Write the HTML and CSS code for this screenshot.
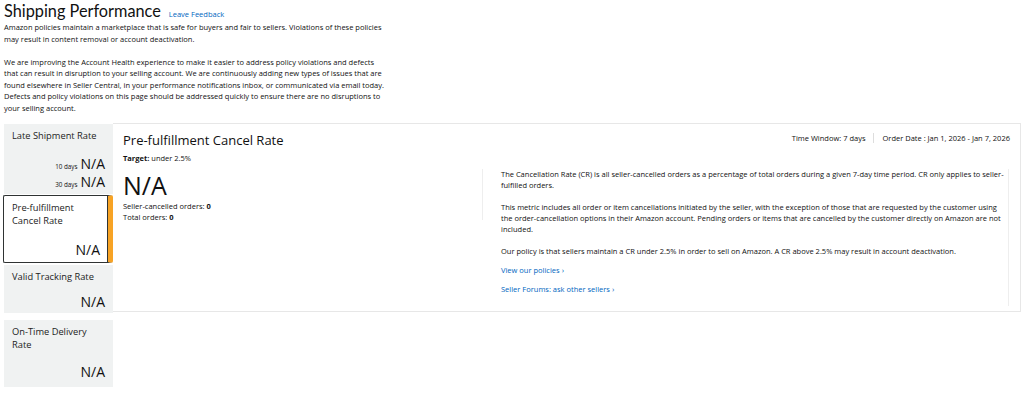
FILE: index.html
```html
<!DOCTYPE html>
<html lang="en">
<head>
    <meta charset="UTF-8">
    <title>Shipping Performance</title>
    <link rel="stylesheet" href="styles.css">
</head>
<body>
    <div class="page">
        <div class="header">
            <h1>Shipping Performance</h1>
            <a class="link feedback" href="#">Leave Feedback</a>
        </div>
        <p class="intro">Amazon policies maintain a marketplace that is safe for buyers and fair to sellers. Violations of these policies may result in content removal or account deactivation.</p>
        <p class="intro">We are improving the Account Health experience to make it easier to address policy violations and defects that can result in disruption to your selling account. We are continuously adding new types of issues that are found elsewhere in Seller Central, in your performance notifications inbox, or communicated via email today. Defects and policy violations on this page should be addressed quickly to ensure there are no disruptions to your selling account.</p>

        <div class="metrics">
            <div class="tabs">
                <div class="tab tab-late">
                    <div class="tab-name">Late Shipment Rate</div>
                    <div class="tab-values">
                        <div class="row"><span class="days">10 days</span><span class="na">N/A</span></div>
                        <div class="row"><span class="days">30 days</span><span class="na">N/A</span></div>
                    </div>
                </div>
                <div class="tab tab-cancel selected">
                    <div class="tab-name">Pre-fulfillment<br>Cancel Rate</div>
                    <div class="tab-values"><span class="na">N/A</span></div>
                </div>
                <div class="tab tab-tracking">
                    <div class="tab-name">Valid Tracking Rate</div>
                    <div class="tab-values"><span class="na">N/A</span></div>
                </div>
                <div class="tab tab-delivery">
                    <div class="tab-name">On-Time Delivery<br>Rate</div>
                    <div class="tab-values"><span class="na">N/A</span></div>
                </div>
            </div>

            <div class="panel">
                <div class="panel-top">
                    <div>
                        <h2>Pre-fulfillment Cancel Rate</h2>
                        <p class="target"><b>Target:</b> under 2.5%</p>
                    </div>
                    <div class="window">
                        <span>Time Window: 7 days</span>
                        <span class="sep"></span>
                        <span>Order Date : Jan 1, 2026 - Jan 7, 2026</span>
                    </div>
                </div>
                <div class="panel-body">
                    <div class="stats">
                        <div class="big-na">N/A</div>
                        <p>Seller-cancelled orders: <b>0</b></p>
                        <p>Total orders: <b>0</b></p>
                    </div>
                    <div class="about">
                        <p>The Cancellation Rate (CR) is all seller-cancelled orders as a percentage of total orders during a given 7-day time period. CR only applies to seller-fulfilled orders.</p>
                        <p>This metric includes all order or item cancellations initiated by the seller, with the exception of those that are requested by the customer using the order-cancellation options in their Amazon account. Pending orders or items that are cancelled by the customer directly on Amazon are not included.</p>
                        <p>Our policy is that sellers maintain a CR under 2.5% in order to sell on Amazon. A CR above 2.5% may result in account deactivation.</p>
                        <a class="link more" href="#">View our policies<span class="chev">›</span></a>
                        <a class="link more" href="#">Seller Forums: ask other sellers<span class="chev">›</span></a>
                    </div>
                </div>
            </div>
        </div>
    </div>
</body>
</html>
```

FILE: styles.css
```css
body {
    margin: 0;
    font-family: "Open Sans", Arial, sans-serif;
    color: #111;
    background: #fff;
}
.page {
    padding: 0 3px 0 4px;
}
.header {
    display: flex;
    align-items: baseline;
    gap: 8px;
    height: 22px;
}
h1 {
    margin: 0;
    font-family: Lato, "Open Sans", sans-serif;
    font-size: 16.3px;
    font-weight: 400;
    line-height: 22px;
}
.link {
    color: #0066c0;
    text-decoration: none;
}
.feedback {
    font-size: 7.5px;
}
.intro {
    margin: 0 0 11.5px;
    max-width: 385px;
    font-size: 7.5px;
    line-height: 11.5px;
}
.intro:last-of-type {
    margin-bottom: 9px;
}
.metrics {
    display: flex;
    align-items: flex-start;
}
.tabs {
    width: 109px;
    display: flex;
    flex-direction: column;
    padding-top: 1px;
}
.tab {
    background: #f0f2f2;
    padding: 5px 8px 0 8px;
    display: flex;
    flex-direction: column;
    justify-content: space-between;
    box-sizing: border-box;
}
.tab-name {
    font-size: 9.3px;
    line-height: 13px;
    color: #222;
}
.tab-values {
    text-align: right;
    padding-bottom: 1px;
}
.row {
    display: flex;
    justify-content: flex-end;
    align-items: baseline;
    height: 18px;
}
.days {
    font-size: 6.3px;
    margin-right: 3px;
}
.na {
    font-size: 14px;
    line-height: 16px;
}
.tab-late {
    height: 70px;
}
.tab-late .tab-values {
    padding-bottom: 2px;
}
.tab-cancel {
    height: 68px;
    margin: 1px 0 2px -1px;
    width: 110px;
    background: #fff;
    border: 1px solid #2f3333;
    border-radius: 2px;
    border-right: 5px solid #f7a325;
    box-shadow: inset -1px 0 0 #2f3333;
}
.tab-cancel .tab-values {
    padding-bottom: 2px;
}
.tab-tracking {
    height: 48px;
}
.tab-delivery {
    height: 67px;
    margin-top: 7px;
}
.tab-delivery .tab-values {
    padding-bottom: 5px;
}
.panel {
    flex: 1;
    border: 1px solid #e7e7e7;
    border-left: none;
    height: 189px;
    box-sizing: border-box;
    padding: 6px 10px 0 10px;
}
.panel-top {
    display: flex;
    justify-content: space-between;
    align-items: flex-start;
}
h2 {
    margin: 0;
    font-size: 13px;
    font-weight: 400;
    line-height: 20px;
}
.target {
    margin: 3px 0 0;
    font-size: 7.5px;
}
.window {
    display: flex;
    align-items: center;
    gap: 8px;
    font-size: 7.5px;
    padding-top: 3px;
}
.sep {
    width: 1px;
    height: 10px;
    background: #ddd;
}
.panel-body {
    display: flex;
    margin-top: 6px;
}
.stats {
    width: 359px;
    height: 51px;
    border-right: 1px solid #eee;
}
.big-na {
    font-size: 25px;
    line-height: 28px;
    margin-top: 2px;
    margin-bottom: 2px;
}
.stats p {
    margin: 0;
    font-size: 7.5px;
    line-height: 11px;
}
.about {
    flex: 1;
    padding: 0 2px 4px 18px;
    margin-right: 1px;
    border-right: 1px solid #eee;
}
.about p {
    margin: 0 0 11px;
    font-size: 7.5px;
    line-height: 11px;
}
.about p:nth-child(3) {
    margin-bottom: 7px;
}
.more {
    display: block;
    font-size: 7.5px;
    line-height: 11px;
    margin-bottom: 7px;
}
.chev {
    margin-left: 2px;
    font-size: 8px;
}
```
